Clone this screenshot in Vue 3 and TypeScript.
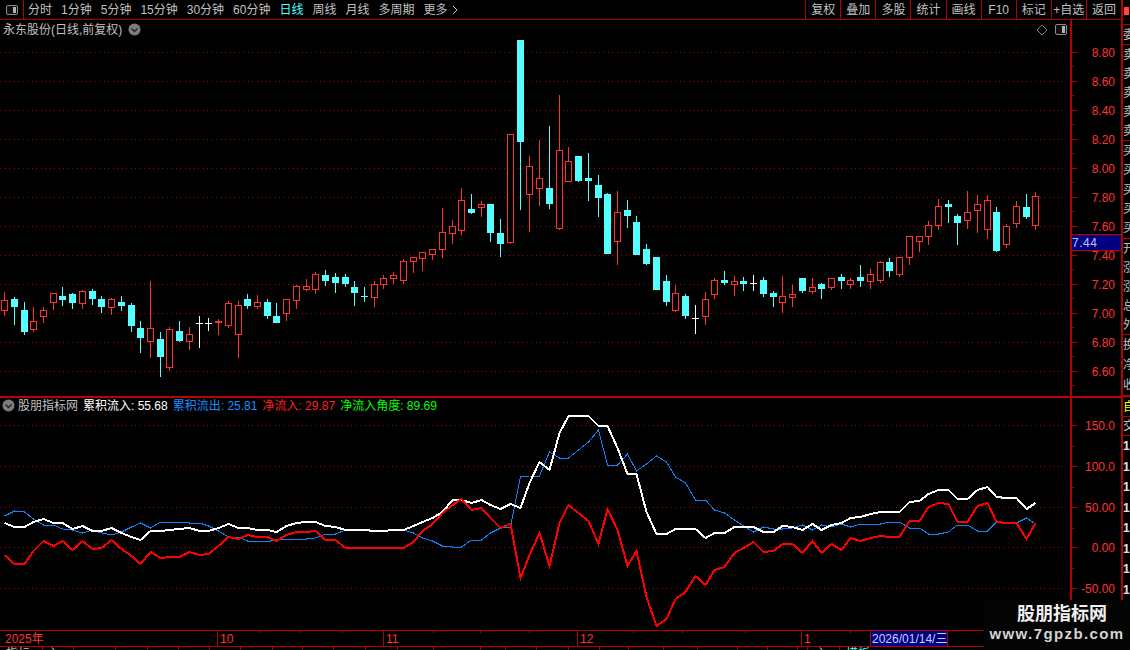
<script setup lang="ts">
type Kind = 'r' | 'c' | 'w'
type Candle = [Kind, number, number, number, number]

const leftTabs = [
  { label: '分时' }, { label: '1分钟' }, { label: '5分钟' }, { label: '15分钟' }, { label: '30分钟' },
  { label: '60分钟' }, { label: '日线', active: true }, { label: '周线' }, { label: '月线' }, { label: '多周期' }
]
const rightTabs = ['复权', '叠加', '多股', '统计', '画线', 'F10', '标记', '+自选', '返回']

const raw: Candle[] = [
  ['r',292,300,311,316],['c',297,299,307,325],['c',302,310,332,335],['r',307,321,330,332],['r',307,310,317,323],
  ['r',293,293,303,310],['c',287,296,300,306],['c',293,294,303,309],['r',290,291,304,309],['c',289,291,299,305],
  ['c',296,299,307,313],['r',298,299,308,315],['c',296,302,306,311],['c',303,305,326,332],['c',321,328,338,353],
  ['r',281,328,342,358],['c',332,339,357,377],['r',327,329,368,371],['c',321,331,341,342],['r',327,334,342,350],
  ['w',316,323,323,348],['w',318,323,323,331],['r',319,321,323,335],['r',301,303,326,328],['r',301,305,335,358],
  ['c',294,299,306,309],['r',295,302,307,309],['c',299,302,316,319],['c',303,316,323,323],['r',299,299,314,321],
  ['r',285,286,301,309],['r',279,286,290,291],['r',272,274,290,294],['c',270,275,281,286],['c',273,277,283,293],
  ['c',274,277,284,287],['c',281,287,293,306],['c',287,296,297,302],['r',281,284,298,307],['r',275,278,285,289],
  ['r',272,275,279,284],['r',259,261,281,284],['r',257,257,262,273],['r',252,252,259,271],['r',249,249,255,260],
  ['r',208,232,250,258],['r',220,226,234,244],['r',188,200,231,235],['c',194,209,213,214],['r',201,204,208,217],
  ['c',204,204,233,242],['c',219,233,244,257],['r',134,134,243,244],['c',40,40,142,210],['r',156,166,195,232],
  ['r',140,178,189,206],['c',126,188,204,209],['r',95,150,229,230],['r',147,161,182,182],['c',156,156,181,182],
  ['c',153,178,181,201],['c',175,185,198,217],['c',193,194,254,254],['r',191,212,242,265],['c',200,210,216,228],
  ['c',216,222,255,255],['c',244,249,264,265],['c',257,257,290,290],['c',275,281,302,306],['r',285,293,311,312],
  ['c',294,296,316,319],['w',305,318,318,334],['r',292,299,317,325],['r',278,280,295,299],['c',271,280,283,285],
  ['r',276,281,285,296],['c',277,281,284,291],['w',275,283,283,291],['c',277,280,294,297],['c',291,293,297,307],
  ['r',276,296,303,313],['r',285,294,298,307],['c',278,278,291,293],['r',278,287,292,294],['c',283,284,289,299],
  ['r',278,278,288,290],['c',274,277,281,289],['r',278,280,285,289],['c',265,277,281,287],['r',269,274,282,289],
  ['r',261,262,281,283],['c',258,262,271,277],['r',257,257,275,277],['r',236,236,258,265],['r',236,236,242,252],
  ['r',221,225,237,245],['r',199,206,226,230],['c',200,204,207,223],['c',214,216,223,245],['r',191,212,221,229],
  ['r',195,204,211,233],['r',195,200,230,239],['c',207,212,251,252],['r',224,226,245,248],['r',201,206,224,228],
  ['c',194,207,217,219],['r',192,196,226,230]
]

const colors: Record<Kind, string> = { r: '#ff3232', c: '#54ffff', w: '#ffffff' }
const xAt = (i: number): number => Math.floor(4.55 + 9.729 * i)
const candles = raw.map((c, i) => {
  const [kind, hi, top, bot, lo] = c
  return { kind, hi, top, bot, lo, x: xAt(i), color: colors[kind] }
})

const priceGrid = [
  { y: 52, t: '8.80' }, { y: 81, t: '8.60' }, { y: 110, t: '8.40' }, { y: 139, t: '8.20' },
  { y: 168, t: '8.00' }, { y: 197, t: '7.80' }, { y: 226, t: '7.60' }, { y: 255, t: '7.40' },
  { y: 284, t: '7.20' }, { y: 313, t: '7.00' }, { y: 342, t: '6.80' }, { y: 371, t: '6.60' }
]
const indGrid = [
  { y: 425, t: '150.0' }, { y: 466, t: '100.0' }, { y: 507, t: '50.00' }, { y: 547, t: '0.00' }, { y: 588, t: '-50.00' }
]

const build = (a: number[], b: number[], c: number[]): string => {
  const ys = [...a.map(v => 480 + v / 3), ...b.map(v => 400 + v / 3), ...c.map(v => 470 + v / 3)]
  return ys.map((y, i) => `${xAt(i) + 0.5},${Math.round(y)}`).join(' ')
}

const whiteLine = build(
  [128,141,141,126,118,128,128,148,139,152,152,145,160,172,180,152,152,151,148,145,152,152,143,133,143,143,149,149,156,138,128,127,125,139,140,149,150,150,153,153,150,150,137,126,115,95],
  [300,300,308,300,314,327,312,324,248,185,210,100,49,49,49,77,77,145,221,221,335,401,401,386,386,386,414,398,398,380,380,380,395,395,377],
  [170,180,162,180,165,160,143,142,133,125,125,125,96,93,72,60,60,87,87,60,50,80,83,85,117,98]
)
const blueLine = build(
  [108,94,97,118,135,136,148,150,160,150,158,165,155,142,130,143,125,125,125,130,130,137,152,170,170,182,182,185,176,176,176,176,175,162,162,150,150,150,150,150,150,150,160,175,183,198],
  [441,441,421,421,400,385,382,230,229,229,155,175,175,150,127,90,196,196,163,214,192,167,187,232,250,300,300,330,338,360,378,397,382,388,388],
  [175,165,180,165,172,162,172,163,163,162,157,157,175,175,192,192,185,165,165,183,183,157,158,158,145,163]
)
const redLine = build(
  [224,252,252,212,184,198,184,210,184,206,203,181,207,228,252,216,233,230,230,217,224,222,198,170,176,166,170,170,184,166,156,155,152,180,180,203,204,204,204,204,204,204,185,152,133,98],
  [314,297,330,323,355,385,373,535,465,398,498,368,315,340,362,433,326,390,498,452,590,679,657,597,576,527,555,510,502,460,445,426,456,454,431],
  [222,248,212,248,222,240,204,212,205,198,201,201,152,152,110,100,103,156,156,107,100,156,158,158,207,160]
)

const topTicks = [259, 300, 342, 433, 480, 529, 633, 682, 745, 850]
const bottomTicks = [42, 73, 115, 147, 178, 209, 240, 272, 302, 333, 365, 397, 433, 480, 505, 536, 568, 599, 628, 663, 697, 737, 767, 797, 807, 839]
const monthMarks = [{ x: 217, t: '10' }, { x: 383, t: '11' }, { x: 577, t: '12' }, { x: 801, t: '1' }]

const sideGroups = [
  { h: 20, rows: ['委'] },
  { h: 96, rows: ['卖', '卖', '卖', '卖', '卖'] },
  { h: 98, rows: ['买', '买', '买', '买', '买'] },
  { h: 96, rows: ['开', '涨', '涨', '总', '外'] },
  { h: 61, rows: ['换', '净', '收'] }
]
const digitRows = Array.from({ length: 8 }, (_, i) => i)
</script>

<template>
  <div class="terminal">
    <div class="left">
      <header class="toolbar">
        <div class="panel-btn">
          <svg width="14" height="12" viewBox="0 0 14 12">
            <rect x="1.5" y="1.5" width="11" height="9" rx="1.5" fill="#111" stroke="#8c8c8c" />
            <rect x="8" y="3" width="3" height="6" fill="#b4b4b4" />
          </svg>
        </div>
        <nav class="tabs">
          <span v-for="t in leftTabs" :key="t.label" class="tab" :class="{ active: t.active }">{{ t.label }}</span>
          <span class="tab">更多<svg class="more" width="7" height="10" viewBox="0 0 7 10"><path d="M1 1l4 4-4 4" fill="none" stroke="#c0c0c0" /></svg></span>
        </nav>
        <div class="actions">
          <span v-for="t in rightTabs" :key="t" class="action">{{ t }}</span>
        </div>
      </header>

      <section class="pane price-pane">
        <div class="pane-title">
          <span class="name">永东股份(日线,前复权)</span>
          <svg width="13" height="13" viewBox="0 0 13 13">
            <circle cx="6.5" cy="6.5" r="6" fill="#7c7c7c" />
            <path d="M3.5 5.5l3 3 3-3" fill="none" stroke="#222" stroke-width="1.4" />
          </svg>
        </div>
        <svg class="chart" width="1121" height="376" viewBox="0 20 1121 376">
          <g shape-rendering="crispEdges">
            <line v-for="g in priceGrid" :key="g.y" x1="0" x2="1066" :y1="g.y + 0.5" :y2="g.y + 0.5" stroke="#a00000" stroke-dasharray="1 3.5" />
            <rect x="1070" y="20" width="2" height="376" fill="#b00000" />
            <rect v-for="g in priceGrid" :key="'t' + g.y" x="1072" :y="g.y" width="5" height="1" fill="#b00000" />
            <rect v-for="g in priceGrid" :key="'m' + g.y" x="1072" :y="g.y + 14" width="2" height="1" fill="#b00000" />
            <g v-for="c in candles" :key="c.x">
              <rect :x="c.x" :y="c.hi" width="1" :height="c.lo - c.hi" :fill="c.color" />
              <rect v-if="c.kind === 'c'" :x="c.x - 3" :y="c.top" width="7" :height="Math.max(c.bot - c.top, 1)" :fill="c.color" />
              <rect v-else-if="c.kind === 'r'" :x="c.x - 2.5" :y="c.top + 0.5" width="6" :height="c.bot - c.top - 1" fill="#000" :stroke="c.color" />
              <rect v-else :x="c.x - 3" :y="c.top" width="7" height="1" :fill="c.color" />
            </g>
            <rect x="1072" y="234" width="49" height="17" fill="#000080" />
            <rect x="1072" y="234" width="49" height="1" fill="#c00000" />
            <rect x="1072" y="250" width="49" height="1" fill="#c00000" />
          </g>
          <path d="M1042 25l5 5-5 5-5-5z" fill="none" stroke="#808080" />
          <rect x="1055.5" y="24.5" width="11" height="10" rx="1.5" fill="#111" stroke="#8c8c8c" />
          <rect x="1062" y="26" width="3" height="7" fill="#b4b4b4" />
          <text v-for="g in priceGrid" :key="'l' + g.y" class="axis" x="1115" :y="g.y + 5" text-anchor="end">{{ g.t }}</text>
          <text class="badge" x="1072" y="247">7.44</text>
        </svg>
      </section>

      <section class="pane ind-pane">
        <div class="pane-title ind-title">
          <svg width="13" height="13" viewBox="0 0 13 13">
            <circle cx="6.5" cy="6.5" r="6" fill="#7c7c7c" />
            <path d="M3.5 5.5l3 3 3-3" fill="none" stroke="#222" stroke-width="1.4" />
          </svg>
          <span class="name">股朋指标网</span>
          <span class="v-white">累积流入: 55.68</span>
          <span class="v-blue">累积流出: 25.81</span>
          <span class="v-red">净流入: 29.87</span>
          <span class="v-green">净流入角度: 89.69</span>
        </div>
        <svg class="chart" width="1121" height="232" viewBox="0 398 1121 232">
          <g shape-rendering="crispEdges">
            <line v-for="g in indGrid" :key="g.y" x1="0" x2="1066" :y1="g.y + 0.5" :y2="g.y + 0.5" stroke="#a00000" stroke-dasharray="1 3.5" />
            <rect x="1070" y="398" width="2" height="202" fill="#b00000" />
            <rect v-for="g in indGrid" :key="'t' + g.y" x="1072" :y="g.y" width="5" height="1" fill="#b00000" />
            <rect v-for="g in indGrid.slice(0, 4)" :key="'m' + g.y" x="1072" :y="g.y + 21" width="2" height="1" fill="#b00000" />
            <polyline :points="blueLine" fill="none" stroke="#0a84ff" stroke-width="1" />
            <polyline :points="whiteLine" fill="none" stroke="#ffffff" stroke-width="2" />
            <polyline :points="redLine" fill="none" stroke="#ff0000" stroke-width="2" />
          </g>
          <text v-for="g in indGrid" :key="'l' + g.y" class="axis" x="1115" :y="g.y + 5" text-anchor="end">{{ g.t }}</text>
        </svg>
      </section>

      <svg class="chart" width="984" height="20" viewBox="0 630 984 20">
        <g shape-rendering="crispEdges">
          <rect x="0" y="630" width="984" height="1" fill="#b00000" />
          <rect x="0" y="646" width="984" height="1" fill="#b00000" />
          <rect v-for="x in topTicks" :key="x" :x="x" y="631" width="1" height="2" fill="#b00000" />
          <rect v-for="x in bottomTicks" :key="'b' + x" :x="x" y="647" width="1" height="3" fill="#b00000" />
          <rect v-for="m in monthMarks" :key="m.x" :x="m.x" y="631" width="1" height="15" fill="#b00000" />
          <rect x="870" y="630" width="78" height="17" fill="#b00000" />
          <rect x="871" y="631" width="76" height="15" fill="#000080" />
        </g>
        <text class="axis" x="5" y="643">2025年</text>
        <text v-for="m in monthMarks" :key="'t' + m.x" class="axis" :x="m.x + 3" y="643">{{ m.t }}</text>
        <text class="date" x="872" y="643">2026/01/14/三</text>
        <text class="cut" x="6" y="658">指标</text>
        <text class="cut" x="47" y="658">主</text>
        <text class="cut" x="815" y="658">主</text>
        <text class="cut cyan" x="846" y="658">模板</text>
      </svg>
    </div>

    <aside class="sidebar">
      <div class="side-cell first"><i class="mark"></i></div>
      <div v-for="(g, i) in sideGroups" :key="i" class="side-group" :style="{ height: g.h + 'px' }">
        <span v-for="(r, j) in g.rows" :key="j" class="side-row">{{ r }}</span>
      </div>
      <div class="side-group yellow"><span class="side-row">自</span></div>
      <div class="side-group cross"><span class="side-row">交</span></div>
      <div class="digits"><span v-for="d in digitRows" :key="d" class="side-row digit">1</span></div>
    </aside>

    <div class="watermark">
      <div class="wm-title">股朋指标网</div>
      <div class="wm-url">www.7gpzb.com</div>
    </div>
  </div>
</template>

<style scoped>
.terminal {
  position: relative;
  display: flex;
  width: 1130px;
  height: 650px;
  overflow: hidden;
  background: #000;
  color: #c0c0c0;
  font: 12px/1 "Liberation Sans", "Noto Sans CJK SC", sans-serif;
}
.left {
  display: flex;
  flex-direction: column;
  width: 1121px;
  flex: none;
}
.toolbar {
  display: flex;
  align-items: stretch;
  height: 20px;
  box-sizing: border-box;
  border-bottom: 1px solid #b00000;
}
.panel-btn {
  display: flex;
  align-items: center;
  justify-content: center;
  width: 23px;
  border-right: 1px solid #b00000;
}
.tabs {
  display: flex;
  align-items: center;
  gap: 9px;
  margin-left: 4px;
}
.tab { white-space: nowrap; }
.tab.active { color: #54ffff; }
.more { margin-left: 4px; vertical-align: -1px; }
.actions { display: flex; margin-left: auto; }
.action {
  display: flex;
  align-items: center;
  justify-content: center;
  width: 35.1px;
  box-sizing: border-box;
  border-left: 1px solid #b00000;
  white-space: nowrap;
}
.pane { position: relative; }
.price-pane { height: 376px; }
.ind-pane { height: 234px; border-top: 2px solid #c00000; box-sizing: border-box; }
.chart { display: block; }
.pane-title {
  position: absolute;
  left: 3px;
  top: 3px;
  display: flex;
  align-items: center;
  gap: 6px;
  z-index: 1;
}
.ind-title { left: 2px; top: 0; height: 15px; gap: 5px; }
.ind-title .name { margin-left: -2px; }
.v-white { color: #ffffff; }
.v-blue { color: #1a8cff; }
.v-red { color: #ff2020; }
.v-green { color: #00ff00; }
.axis {
  font: 12px "Liberation Sans", "Noto Sans CJK SC", sans-serif;
  fill: #ff3232;
}
.badge {
  font: 12px "Liberation Sans", sans-serif;
  fill: #b8c4ff;
  letter-spacing: 0.5px;
}
.date {
  font: 12px "Liberation Sans", "Noto Sans CJK SC", sans-serif;
  fill: #c8d0ff;
}
.cut {
  font: 12px "Liberation Sans", "Noto Sans CJK SC", sans-serif;
  fill: #c0c0c0;
}
.cut.cyan { fill: #54ffff; }
.sidebar {
  display: flex;
  flex-direction: column;
  width: 9px;
  height: 600px;
  box-sizing: border-box;
  border-left: 2px solid #b00000;
  overflow: hidden;
  flex: none;
}
.side-cell.first {
  height: 25px;
  flex: none;
  box-sizing: border-box;
  border-bottom: 1px solid #b00000;
}
.mark {
  display: block;
  width: 5px;
  height: 8px;
  margin: 7px 0 0 1px;
  background: #ff4a3a;
}
.side-group {
  display: flex;
  flex-direction: column;
  flex: none;
  box-sizing: border-box;
  border-bottom: 1px solid #b00000;
}
.side-row {
  display: flex;
  flex: 1;
  align-items: center;
  white-space: nowrap;
  font-size: 12px;
}
.yellow { height: 21px; color: #ffff00; border-top: 1px solid #c00000; }
.cross { height: 19px; }
.digits {
  display: flex;
  flex-direction: column;
  flex: 1;
}
.digit { color: #e0e0e0; font-weight: 700; }
.watermark {
  position: absolute;
  left: 984px;
  top: 600px;
  width: 146px;
  height: 50px;
  background: #040404;
  text-align: center;
}
.wm-title {
  margin-top: 4px;
  margin-left: 10px;
  font-size: 18px;
  line-height: 20px;
  font-weight: 700;
  color: #f0f0f0;
}
.wm-url {
  margin-top: 1px;
  font-size: 15px;
  line-height: 18px;
  font-weight: 700;
  letter-spacing: 1.4px;
  color: #d4d4d4;
  white-space: nowrap;
}
</style>
